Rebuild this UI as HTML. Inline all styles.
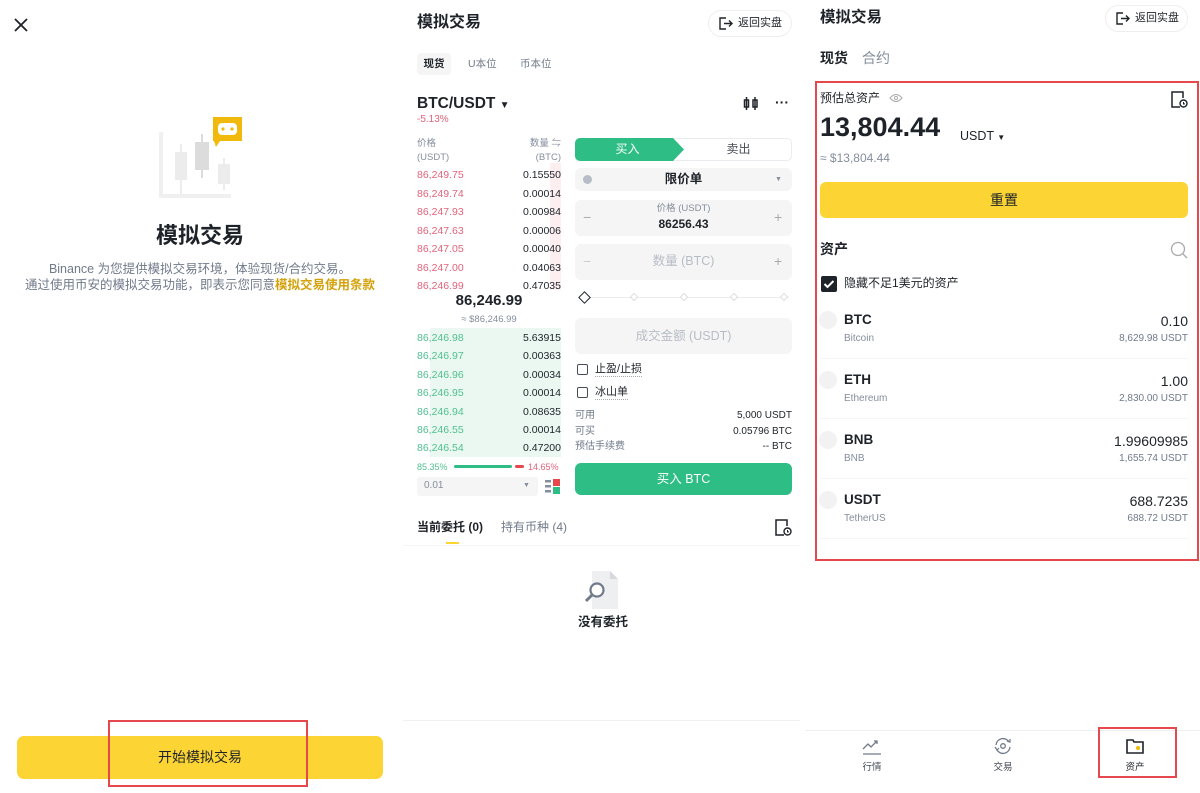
<!DOCTYPE html><html><head><meta charset="utf-8"><style>
*{margin:0;padding:0;box-sizing:border-box}
body{width:1200px;height:793px;position:relative;background:#fff;font-family:"Liberation Sans","Noto Sans CJK SC",sans-serif;color:#1e2329;overflow:hidden}
div,span{position:absolute;white-space:nowrap;line-height:1}
.g{color:#848e9c}
.r{color:#e0637b}
.gr{color:#4fbf8f}
.box{background:#f5f5f5;border-radius:6px}
.b{font-weight:bold}
</style></head><body>
<!-- LEFT -->
<svg style="position:absolute;left:13px;top:17px" width="16" height="16"><path d="M2 2L14 14M14 2L2 14" stroke="#1e2329" stroke-width="1.8"/></svg>
<svg style="position:absolute;left:155px;top:112px" width="92" height="90">
<rect x="4" y="20" width="4" height="66" fill="#f0f0f0"/><rect x="4" y="82" width="72" height="4" fill="#f0f0f0"/>
<rect x="20" y="40" width="12" height="28" fill="#ececec"/><rect x="25" y="32" width="2" height="50" fill="#ececec"/>
<rect x="40" y="30" width="14" height="28" fill="#dcdcdc"/><rect x="46" y="22" width="2" height="44" fill="#dcdcdc"/>
<rect x="63" y="52" width="12" height="20" fill="#ececec"/><rect x="68" y="46" width="2" height="32" fill="#ececec"/>
<path d="M58 5h29v24h-22l-4 6-2-6h-1z" fill="#f0b90b"/>
<rect x="63" y="11" width="19" height="12" rx="4" fill="#fff"/><circle cx="68" cy="17" r="1.6" fill="#f0b90b"/><circle cx="77" cy="17" r="1.6" fill="#f0b90b"/>
</svg>
<div class="b" style="left:0;width:400px;text-align:center;top:225px;font-size:22px">模拟交易</div>
<div style="left:0;width:400px;text-align:center;top:263px;font-size:12.5px;color:#707a8a">Binance 为您提供模拟交易环境，体验现货/合约交易。</div>
<div style="left:0;width:400px;text-align:center;top:279px;font-size:12.5px;color:#707a8a">通过使用币安的模拟交易功能，即表示您同意<span style="position:static;color:#d4a10a;font-weight:bold">模拟交易使用条款</span></div>
<div style="left:17px;top:736px;width:366px;height:43px;background:#fcd535;border-radius:7px;font-size:14px;text-align:center;line-height:43px">开始模拟交易</div>
<div style="left:108px;top:720px;width:200px;height:67px;border:2px solid #e5484d"></div>

<!-- MIDDLE -->
<div class="b" style="left:417px;top:15px;font-size:16px">模拟交易</div>
<div style="left:708px;top:10px;width:84px;height:27px;border:1px solid #eee;border-radius:14px;font-size:11px;line-height:25px;padding-left:29px">返回实盘</div>
<svg style="position:absolute;left:719px;top:17px" width="14" height="13"><path d="M7 1H1v11h6M5 6.5h8M10 3.5l3 3-3 3" fill="none" stroke="#1e2329" stroke-width="1.4"/></svg>
<div class="box" style="left:417px;top:53px;width:34px;height:22px;font-size:10.5px;line-height:22px;text-align:center;font-weight:bold;border-radius:4px">现货</div>
<div class="g" style="left:468px;top:59px;font-size:10.5px;color:#707a8a">U本位</div>
<div class="g" style="left:520px;top:59px;font-size:10.5px;color:#707a8a">币本位</div>
<div class="b" style="left:417px;top:96px;font-size:15.5px">BTC/USDT <span style="position:static;font-size:10px">▼</span></div>
<div class="r" style="left:417px;top:115px;font-size:10px">-5.13%</div>
<svg style="position:absolute;left:743px;top:97px" width="16" height="14"><rect x="1.5" y="3" width="4" height="7" fill="none" stroke="#1e2329" stroke-width="1.5"/><rect x="10" y="3" width="4" height="7" fill="none" stroke="#1e2329" stroke-width="1.5"/><path d="M3.5 0v13M12 0v13" stroke="#1e2329" stroke-width="1.5"/></svg>
<div class="b" style="left:775px;top:95px;font-size:14px">···</div>
<div class="g" style="left:417px;top:139px;font-size:9.5px">价格</div>
<div class="g" style="left:417px;top:153px;font-size:9.5px">(USDT)</div>
<div class="g" style="left:520px;top:139px;width:41px;text-align:right;font-size:9.5px">数量 ⇋</div>
<div class="g" style="left:520px;top:153px;width:41px;text-align:right;font-size:9.5px">(BTC)</div>
<div style="left:550px;top:163px;width:11px;height:127px;background:#fdeef0"></div>
<div style="left:430px;top:328px;width:131px;height:129px;background:#ebf8f1"></div>
<div class="r" style="left:417px;top:166px;font-size:10.5px;line-height:18.5px">86,249.75<br>86,249.74<br>86,247.93<br>86,247.63<br>86,247.05<br>86,247.00<br>86,246.99</div>
<div style="left:490px;width:71px;text-align:right;top:166px;font-size:10.5px;line-height:18.5px">0.15550<br>0.00014<br>0.00984<br>0.00006<br>0.00040<br>0.04063<br>0.47035</div>
<div class="b" style="left:417px;width:144px;text-align:center;top:293px;font-size:15px">86,246.99</div>
<div class="g" style="left:417px;width:144px;text-align:center;top:315px;font-size:9.5px">≈ $86,246.99</div>
<div class="gr" style="left:417px;top:329px;font-size:10.5px;line-height:18.4px">86,246.98<br>86,246.97<br>86,246.96<br>86,246.95<br>86,246.94<br>86,246.55<br>86,246.54</div>
<div style="left:490px;width:71px;text-align:right;top:329px;font-size:10.5px;line-height:18.4px">5.63915<br>0.00363<br>0.00034<br>0.00014<br>0.08635<br>0.00014<br>0.47200</div>
<div class="gr" style="left:417px;top:463px;font-size:9px">85.35%</div>
<div style="left:454px;top:465px;width:58px;height:3px;background:#2ebd85;border-radius:2px"></div>
<div style="left:515px;top:465px;width:9px;height:3px;background:#e5484d;border-radius:2px"></div>
<div class="r" style="left:528px;top:463px;font-size:9px">14.65%</div>
<div class="box" style="left:417px;top:477px;width:121px;height:19px;border-radius:3px"></div>
<div class="g" style="left:424px;top:481px;font-size:10px">0.01</div>
<div class="g" style="left:523px;top:482px;font-size:7px">▼</div>
<svg style="position:absolute;left:545px;top:479px" width="15" height="15"><rect x="0" y="1" width="6" height="2.5" fill="#848e9c"/><rect x="0" y="6" width="6" height="2.5" fill="#848e9c"/><rect x="0" y="11" width="6" height="2.5" fill="#848e9c"/><rect x="8" y="0" width="7" height="7" fill="#e5484d"/><rect x="8" y="8" width="7" height="7" fill="#2ebd85"/></svg>
<!-- form -->
<div style="left:575px;top:138px;width:217px;height:23px;border:1px solid #eaecef;border-radius:5px"></div>
<svg style="position:absolute;left:575px;top:138px" width="110" height="23"><path d="M5 0H98L109 11.5 98 23H5A5 5 0 0 1 0 18V5A5 5 0 0 1 5 0z" fill="#2ebd85"/></svg>
<div style="left:575px;width:105px;text-align:center;top:143px;font-size:12px;color:#fff">买入</div>
<div style="left:685px;width:107px;text-align:center;top:143px;font-size:12px;color:#474d57">卖出</div>
<div class="box" style="left:575px;top:168px;width:217px;height:23px"></div>
<div style="left:583px;top:175px;width:9px;height:9px;border-radius:50%;background:#b7bdc6"></div>
<div class="b" style="left:575px;width:217px;text-align:center;top:173px;font-size:12.5px">限价单</div>
<div class="g" style="left:775px;top:176px;font-size:7px">▼</div>
<div class="box" style="left:575px;top:200px;width:217px;height:36px"></div>
<div class="g" style="left:575px;width:217px;text-align:center;top:204px;font-size:9.5px">价格 (USDT)</div>
<div class="b" style="left:575px;width:217px;text-align:center;top:218px;font-size:12px">86256.43</div>
<div class="g" style="left:583px;top:210px;font-size:14px;color:#aaa">−</div>
<div class="g" style="left:774px;top:210px;font-size:14px;color:#aaa">+</div>
<div class="box" style="left:575px;top:244px;width:217px;height:36px"></div>
<div style="left:575px;width:217px;text-align:center;top:255px;font-size:12.5px;color:#b7bdc6">数量 (BTC)</div>
<div style="left:583px;top:254px;font-size:14px;color:#ccc">−</div>
<div style="left:774px;top:254px;font-size:14px;color:#aaa">+</div>
<div style="left:586px;top:297px;width:203px;height:1px;background:#eaecef"></div>
<div style="left:580px;top:293px;width:9px;height:9px;border:1.3px solid #1e2329;transform:rotate(45deg);background:#fff"></div>
<div style="left:631px;top:294px;width:6px;height:6px;border:1px solid #ddd;transform:rotate(45deg);background:#fff"></div>
<div style="left:681px;top:294px;width:6px;height:6px;border:1px solid #ddd;transform:rotate(45deg);background:#fff"></div>
<div style="left:731px;top:294px;width:6px;height:6px;border:1px solid #ddd;transform:rotate(45deg);background:#fff"></div>
<div style="left:781px;top:294px;width:6px;height:6px;border:1px solid #ddd;transform:rotate(45deg);background:#fff"></div>
<div class="box" style="left:575px;top:318px;width:217px;height:36px"></div>
<div style="left:575px;width:217px;text-align:center;top:330px;font-size:12.5px;color:#b7bdc6">成交金额 (USDT)</div>
<div style="left:577px;top:364px;width:11px;height:11px;border:1px solid #474d57;border-radius:2px"></div>
<div style="left:595px;top:364px;font-size:11px;border-bottom:1px dotted #aaa;padding-bottom:1px">止盈/止损</div>
<div style="left:577px;top:387px;width:11px;height:11px;border:1px solid #474d57;border-radius:2px"></div>
<div style="left:595px;top:387px;font-size:11px;border-bottom:1px dotted #aaa;padding-bottom:1px">冰山单</div>
<div style="left:575px;top:411px;font-size:10px;color:#707a8a">可用</div>
<div style="left:575px;top:427px;font-size:10px;color:#707a8a">可买</div>
<div style="left:575px;top:442px;font-size:10px;color:#707a8a">预估手续费</div>
<div style="left:680px;width:112px;text-align:right;top:411px;font-size:10px">5,000 USDT</div>
<div style="left:680px;width:112px;text-align:right;top:427px;font-size:10px">0.05796 BTC</div>
<div style="left:680px;width:112px;text-align:right;top:442px;font-size:10px">-- BTC</div>
<div style="left:575px;top:463px;width:217px;height:32px;background:#2ebd85;border-radius:6px;color:#fff;text-align:center;line-height:32px;font-size:12.5px">买入 BTC</div>
<div class="b" style="left:417px;top:521px;font-size:12px">当前委托 (0)</div>
<div style="left:501px;top:521px;font-size:12px;color:#707a8a">持有币种 (4)</div>
<div style="left:446px;top:542px;width:13px;height:2px;background:#fcd535"></div>
<div style="left:403px;top:545px;width:397px;height:1px;background:#f5f5f5"></div>
<svg style="position:absolute;left:775px;top:519px" width="17" height="17"><path d="M12 7V1H1v15h8" fill="none" stroke="#1e2329" stroke-width="1.5"/><circle cx="12.5" cy="12.5" r="3.5" fill="none" stroke="#1e2329" stroke-width="1.4"/><path d="M12.5 11v2h1.3" stroke="#1e2329" stroke-width="1"/></svg>
<svg style="position:absolute;left:582px;top:570px" width="42" height="40"><path d="M10 1h18l8 8v30H10z" fill="#eeeff1"/><path d="M28 1v8h8z" fill="#d5d8dc"/><circle cx="15" cy="20" r="6.5" fill="#fff" stroke="#707a8a" stroke-width="2.2"/><path d="M10 25l-6 6" stroke="#707a8a" stroke-width="3"/></svg>
<div class="b" style="left:403px;width:400px;text-align:center;top:616px;font-size:12.5px">没有委托</div>
<div style="left:403px;top:720px;width:397px;height:1px;background:#f0f0f0"></div>

<!-- RIGHT -->
<div class="b" style="left:820px;top:10px;font-size:15.5px">模拟交易</div>
<div style="left:1105px;top:5px;width:83px;height:27px;border:1px solid #eee;border-radius:14px;font-size:11px;line-height:25px;padding-left:29px">返回实盘</div>
<svg style="position:absolute;left:1116px;top:12px" width="14" height="13"><path d="M7 1H1v11h6M5 6.5h8M10 3.5l3 3-3 3" fill="none" stroke="#1e2329" stroke-width="1.4"/></svg>
<div class="b" style="left:820px;top:51px;font-size:14px">现货</div>
<div style="left:862px;top:51px;font-size:14px;color:#848e9c">合约</div>
<div style="left:815px;top:81px;width:384px;height:480px;border:2px solid #e5484d"></div>
<div style="left:820px;top:92px;font-size:12px">预估总资产</div>
<svg style="position:absolute;left:889px;top:93px" width="14" height="10"><path d="M1 5Q7-2 13 5Q7 12 1 5z" fill="none" stroke="#aaa" stroke-width="1"/><circle cx="7" cy="5" r="1.6" fill="none" stroke="#aaa"/></svg>
<svg style="position:absolute;left:1171px;top:91px" width="17" height="17"><path d="M12 7V1H1v15h8" fill="none" stroke="#1e2329" stroke-width="1.5"/><circle cx="12.5" cy="12.5" r="3.5" fill="none" stroke="#1e2329" stroke-width="1.4"/><path d="M12.5 11v2h1.3" stroke="#1e2329" stroke-width="1"/></svg>
<div class="b" style="left:820px;top:114px;font-size:27px">13,804.44</div>
<div style="left:960px;top:130px;font-size:12.5px">USDT <span style="position:static;font-size:8px">▼</span></div>
<div class="g" style="left:820px;top:152px;font-size:12px">≈ $13,804.44</div>
<div style="left:820px;top:182px;width:368px;height:36px;background:#fcd535;border-radius:6px;text-align:center;line-height:36px;font-size:14px">重置</div>
<div class="b" style="left:820px;top:242px;font-size:14px">资产</div>
<svg style="position:absolute;left:1170px;top:241px" width="18" height="18"><circle cx="8" cy="8" r="6.5" fill="none" stroke="#aaa" stroke-width="1.3"/><path d="M13 13l4 4" stroke="#aaa" stroke-width="1.3"/></svg>
<div style="left:821px;top:276px;width:16px;height:16px;background:#1e2329;border-radius:2px"></div>
<svg style="position:absolute;left:821px;top:276px" width="16" height="16"><path d="M3.5 8l3 3 6-6" fill="none" stroke="#fff" stroke-width="2"/></svg>
<div style="left:844px;top:277px;font-size:12px">隐藏不足1美元的资产</div>

<div style="left:819px;top:311px;width:18px;height:18px;border-radius:50%;background:#f2f2f2"></div>
<div class="b" style="left:844px;top:313px;font-size:13.5px">BTC</div>
<div class="g" style="left:844px;top:334px;font-size:10px">Bitcoin</div>
<div style="left:1000px;width:188px;text-align:right;top:314px;font-size:14px">0.10</div>
<div class="g" style="left:1000px;width:188px;text-align:right;top:334px;font-size:10px;color:#707a8a">8,629.98 USDT</div>
<div style="left:820px;top:358px;width:368px;height:1px;background:#f5f5f5"></div>

<div style="left:819px;top:371px;width:18px;height:18px;border-radius:50%;background:#f2f2f2"></div>
<div class="b" style="left:844px;top:373px;font-size:13.5px">ETH</div>
<div class="g" style="left:844px;top:394px;font-size:10px">Ethereum</div>
<div style="left:1000px;width:188px;text-align:right;top:374px;font-size:14px">1.00</div>
<div class="g" style="left:1000px;width:188px;text-align:right;top:394px;font-size:10px;color:#707a8a">2,830.00 USDT</div>
<div style="left:820px;top:418px;width:368px;height:1px;background:#f5f5f5"></div>

<div style="left:819px;top:431px;width:18px;height:18px;border-radius:50%;background:#f2f2f2"></div>
<div class="b" style="left:844px;top:433px;font-size:13.5px">BNB</div>
<div class="g" style="left:844px;top:454px;font-size:10px">BNB</div>
<div style="left:1000px;width:188px;text-align:right;top:434px;font-size:14px">1.99609985</div>
<div class="g" style="left:1000px;width:188px;text-align:right;top:454px;font-size:10px;color:#707a8a">1,655.74 USDT</div>
<div style="left:820px;top:478px;width:368px;height:1px;background:#f5f5f5"></div>

<div style="left:819px;top:491px;width:18px;height:18px;border-radius:50%;background:#f2f2f2"></div>
<div class="b" style="left:844px;top:493px;font-size:13.5px">USDT</div>
<div class="g" style="left:844px;top:514px;font-size:10px">TetherUS</div>
<div style="left:1000px;width:188px;text-align:right;top:494px;font-size:14px">688.7235</div>
<div class="g" style="left:1000px;width:188px;text-align:right;top:514px;font-size:10px;color:#707a8a">688.72 USDT</div>
<div style="left:820px;top:538px;width:368px;height:1px;background:#f5f5f5"></div>

<div style="left:805px;top:730px;width:395px;height:1px;background:#eee"></div>
<svg style="position:absolute;left:862px;top:738px" width="20" height="18"><path d="M1 11l5-5 3 3 6-6M12 3h3v3M1 16h18" fill="none" stroke="#707a8a" stroke-width="1.3"/></svg>
<div style="left:852px;width:40px;text-align:center;top:763px;font-size:9.5px;color:#474d57">行情</div>
<svg style="position:absolute;left:992px;top:737px" width="22" height="18"><path d="M4 8a7 7 0 0 1 13-3M18 10a7 7 0 0 1-13 3" fill="none" stroke="#707a8a" stroke-width="1.3"/><path d="M15 4l3 1 0-3M3 10l2 3 2-2" fill="none" stroke="#707a8a" stroke-width="1.2"/><circle cx="11" cy="9" r="2.3" fill="none" stroke="#707a8a" stroke-width="1.3"/></svg>
<div style="left:983px;width:40px;text-align:center;top:763px;font-size:9.5px;color:#474d57">交易</div>
<svg style="position:absolute;left:1126px;top:737px" width="18" height="18"><path d="M1 3h6l1 2h9v11H1z" fill="none" stroke="#1e2329" stroke-width="1.6"/><circle cx="12" cy="11" r="2" fill="#f0b90b"/></svg>
<div style="left:1115px;width:40px;text-align:center;top:763px;font-size:9.5px">资产</div>
<div style="left:1098px;top:727px;width:79px;height:51px;border:2px solid #e5484d"></div>
</body></html>
